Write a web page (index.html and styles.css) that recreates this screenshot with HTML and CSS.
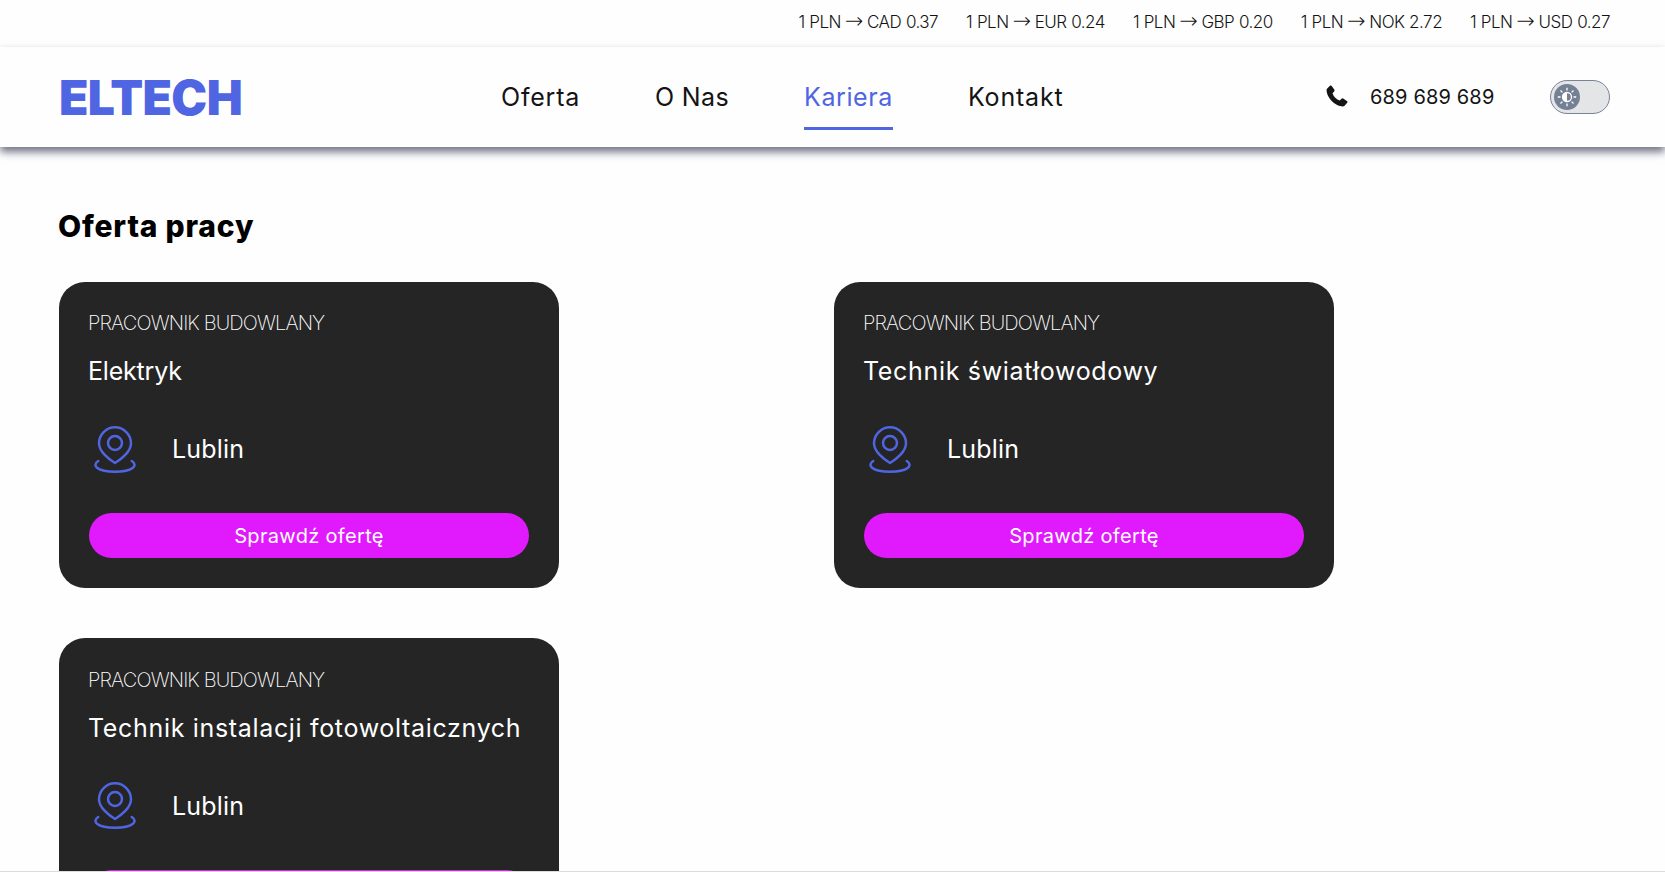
FILE: index.html
```html
<!DOCTYPE html>
<html lang="pl">
<head>
<meta charset="utf-8">
<title>ELTECH – Kariera</title>
<link rel="stylesheet" href="styles.css">
</head>
<body>
<svg class="sprite" aria-hidden="true">
  <symbol id="pin" viewBox="0 0 42 48">
    <g fill="none" stroke="currentColor" stroke-width="2.5" stroke-linecap="round" stroke-linejoin="round">
      <path d="M21 37C15 33.500 5 25.500 5 17.500A16 16.200 0 0 1 37 17.500C37 25.500 27 33.500 21 37Z"/>
      <circle cx="21" cy="17" r="7"/>
      <path d="M4.200 35C-2.500 39.500 3 45.800 21 45.800S44.500 39.500 37.800 35"/>
    </g>
  </symbol>
</svg>
<div class="rates">
  <span class="rate">1 PLN <span class="arrow">→</span> CAD 0.37</span>
  <span class="rate">1 PLN <span class="arrow">→</span> EUR 0.24</span>
  <span class="rate">1 PLN <span class="arrow">→</span> GBP 0.20</span>
  <span class="rate">1 PLN <span class="arrow">→</span> NOK 2.72</span>
  <span class="rate">1 PLN <span class="arrow">→</span> USD 0.27</span>
</div>
<header class="header">
  <a class="logo">ELTECH</a>
  <nav class="nav">
    <a class="nav-link nav-oferta">Oferta</a>
    <a class="nav-link nav-onas">O Nas</a>
    <a class="nav-link nav-kariera active">Kariera</a>
    <a class="nav-link nav-kontakt">Kontakt</a>
  </nav>
  <div class="contact">
    <svg class="phone-icon" viewBox="0 0 22 22"><path d="M1.200 3.500L4.200.600Q5 .100 5.700.900L8.400 4.700Q8.900 5.600 8.200 6.400L6.500 8.200Q7.300 10.800 9.300 12.700T13.700 15.500L15.600 13.700Q16.300 13.100 17.200 13.600L21.200 16.200Q21.900 16.800 21.400 17.600L18.600 20.700Q17.600 21.700 15.400 21.300Q10 20.200 5.700 15.900T.600 6.200Q.300 4.400 1.200 3.500Z"/></svg>
    <span class="phone">689 689 689</span>
    <div class="toggle"><div class="knob">
      <svg viewBox="0 0 26 26" class="sun"><g fill="none" stroke="currentColor" stroke-width="1.300"><circle cx="13" cy="13" r="4.500"/><path d="M13 3.800v2.700M13 19.500v2.700M3.800 13h2.700M19.500 13h2.700M6.500 6.500l1.900 1.900M17.600 17.600l1.900 1.900M6.500 19.500l1.900-1.900M17.600 8.400l1.900-1.900"/></g><path fill="currentColor" d="M13 8.500a4.500 4.500 0 0 0 0 9Z"/></svg>
    </div></div>
  </div>
</header>
<main class="main">
  <h1 class="title">Oferta pracy</h1>
  <div class="offers">
    <article class="card">
      <p class="category">PRACOWNIK BUDOWLANY</p>
      <h2 class="job job-short">Elektryk</h2>
      <div class="place"><svg class="pin"><use href="#pin"/></svg><span class="city">Lublin</span></div>
      <a class="button">Sprawdź ofertę</a>
    </article>
    <article class="card">
      <p class="category">PRACOWNIK BUDOWLANY</p>
      <h2 class="job">Technik światłowodowy</h2>
      <div class="place"><svg class="pin"><use href="#pin"/></svg><span class="city">Lublin</span></div>
      <a class="button">Sprawdź ofertę</a>
    </article>
    <article class="card">
      <p class="category">PRACOWNIK BUDOWLANY</p>
      <h2 class="job">Technik instalacji fotowoltaicznych</h2>
      <div class="place"><svg class="pin"><use href="#pin"/></svg><span class="city">Lublin</span></div>
      <a class="button"></a>
    </article>
  </div>
</main>
<div class="edge"></div>
</body>
</html>
```
FILE: styles.css
```css
* { box-sizing: border-box; }
html { overflow: hidden; }
body {
  margin: 0;
  height: 872px;
  overflow: hidden;
  background: #fefefe;
  color: #141414;
  font-family: Inter, "Open Sans", sans-serif;
}
.sprite { display: none; }
.rates {
  height: 47px;
  padding: 0 55px 4px 0;
  display: flex;
  justify-content: flex-end;
  align-items: center;
  gap: 28px;
  font-size: 17px;
  line-height: 24px;
  font-weight: 350;
  letter-spacing: -0.5px;
  word-spacing: 0.300px;
  white-space: nowrap;
}
.arrow {
  margin: 0 -0.500px;
  font-family: "DejaVu Sans", sans-serif;
  font-size: 22px;
  line-height: 1;
}
.header {
  height: 100px;
  padding: 0 55px 0 59px;
  display: flex;
  align-items: center;
  background: #fefefe;
  box-shadow: 0 5px 8px rgba(28, 31, 58, 0.62);
}
.logo {
  width: 442px;
  font-size: 48px;
  font-weight: 900;
  letter-spacing: -0.600px;
  color: #5065e2;
}
.nav {
  display: flex;
  gap: 75px;
}
.nav-link {
  height: 66px;
  line-height: 67px;
  font-size: 25px;
  white-space: nowrap;
  border-bottom: 3px solid transparent;
}
.nav-oferta { width: 79px; letter-spacing: 0.8px; }
.nav-onas { width: 74px; letter-spacing: 0.350px; }
.nav-kariera { width: 89px; letter-spacing: 0.6px; }
.nav-kontakt { width: 95px; letter-spacing: 0.8px; }
.active {
  color: #5065e2;
  border-color: #5065e2;
}
.contact {
  margin-left: auto;
  display: flex;
  align-items: center;
}
.phone-icon {
  width: 22px;
  height: 22px;
  margin: -3px 22px 0 0;
  fill: #141414;
}
.phone {
  width: 125px;
  margin-right: 55px;
  font-size: 20px;
  letter-spacing: 0.150px;
  white-space: nowrap;
}
.toggle {
  width: 60px;
  height: 34px;
  padding-left: 3px;
  display: flex;
  align-items: center;
  border: 1px solid #7a8398;
  border-radius: 17px;
  background: #e3e5e7;
}
.knob {
  width: 26px;
  height: 26px;
  border-radius: 50%;
  background: #748094;
  color: #fff;
}
.sun { display: block; }
.main { padding: 59px 56px 0 59px; }
.title {
  margin: 0 0 35.600px -1px;
  font-size: 30px;
  line-height: 40px;
  font-weight: 800;
  letter-spacing: 0.800px;
  color: #000;
}
.offers {
  display: grid;
  grid-template-columns: 1fr 1fr;
  row-gap: 50.600px;
}
.card {
  width: 500px;
  height: 306px;
  padding: 30.800px 30px 0;
  border-radius: 26px;
  background: #252525;
  color: #fff;
}
.category {
  margin: 0 0 0 -1px;
  font-size: 20px;
  line-height: 23px;
  font-weight: 200;
  letter-spacing: -0.880px;
  white-space: nowrap;
}
.job {
  margin: 17px 0 0 -1px;
  font-size: 25px;
  line-height: 38px;
  font-weight: 400;
  letter-spacing: 0.670px;
  white-space: nowrap;
}
.job-short { letter-spacing: -0.2px; }
.place {
  height: 47px;
  margin-top: 36px;
  padding-left: 5px;
  display: flex;
  align-items: center;
}
.pin {
  width: 42px;
  height: 48px;
  margin-right: 36px;
  color: #5065e2;
}
.city {
  padding-bottom: 1px;
  font-size: 25px;
  letter-spacing: 0.200px;
}
.button {
  display: block;
  height: 45px;
  margin-top: 40px;
  border-radius: 23px;
  background: #e01afc;
  font-size: 20px;
  line-height: 46px;
  letter-spacing: 0.330px;
  text-align: center;
}
.edge {
  position: absolute;
  left: 0;
  right: 0;
  top: 871px;
  height: 1px;
  background: #dcdcdc;
}
```
